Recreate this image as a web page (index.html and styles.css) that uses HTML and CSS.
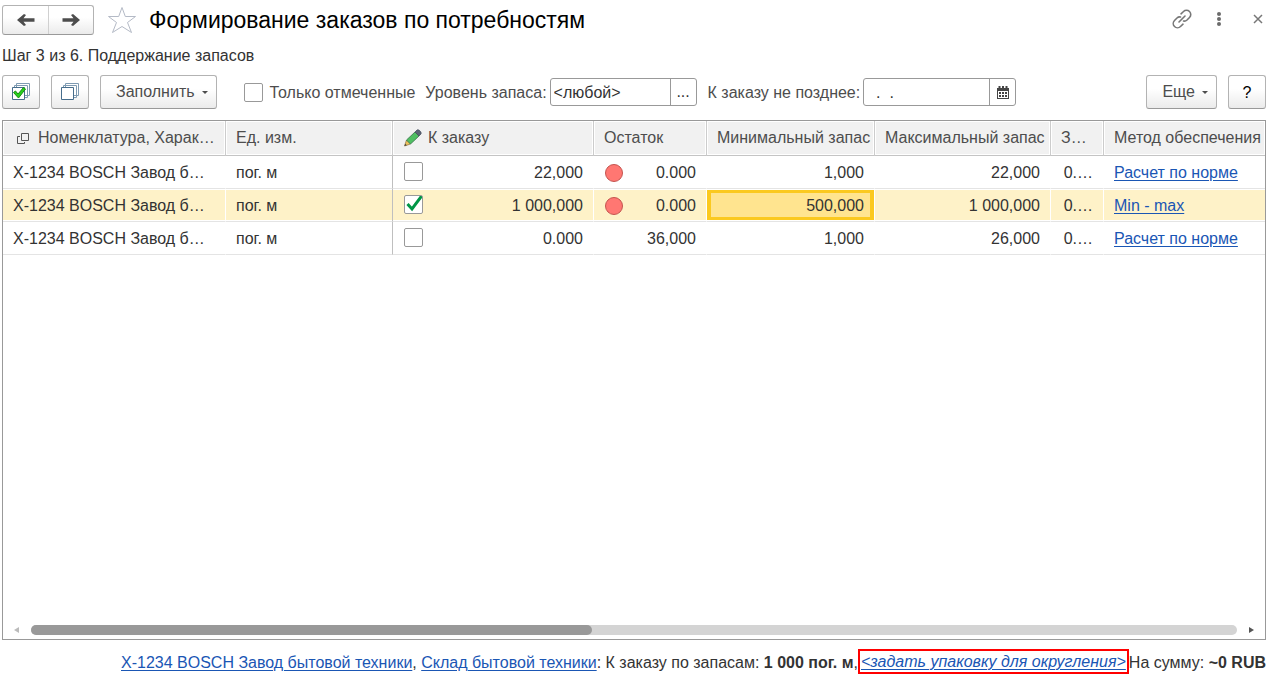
FILE: index.html
```html
<!DOCTYPE html>
<html lang="ru">
<head>
<meta charset="utf-8">
<title>Формирование заказов по потребностям</title>
<link rel="stylesheet" href="styles.css">
</head>
<body>
<div class="page">
  <header class="titlebar">
    <div class="nav">
      <button class="nav-btn" type="button" aria-label="Назад">
        <svg width="18" height="12" viewBox="0 0 18 12"><path d="M0 6 7 0 9 1 6.500 4.300H17.500V7.700H6.500L9 11 7 12Z" fill="#4d4d4d"/></svg>
      </button>
      <button class="nav-btn" type="button" aria-label="Вперед">
        <svg width="18" height="12" viewBox="0 0 18 12"><path d="M18 6 11 0 9 1 11.500 4.300H0.500V7.700H11.500L9 11 11 12Z" fill="#4d4d4d"/></svg>
      </button>
    </div>
    <button class="icon-btn star" type="button" aria-label="В избранное">
      <svg width="30" height="28" viewBox="0 0 30 28"><path d="M15 1.500 18.300 10.500H28.500L20.500 16.500 24.500 26.500 15 20.500 5.500 26.500 9.500 16.500 1.500 10.500H11.700Z" fill="none" stroke="#b4bac6"/></svg>
    </button>
    <h1 class="title">Формирование заказов по потребностям</h1>
    <div class="window-tools">
      <button class="icon-btn" type="button" aria-label="Получить ссылку">
        <svg width="20" height="20" viewBox="0 0 20 20" fill="none" stroke="#777" stroke-width="1.600" stroke-linecap="round"><path d="M9 4.800 11.500 2.500A4 4 0 0 1 17.500 8.500L15 11A4 4 0 0 1 11.500 12M11 15.200 8.500 17.500A4 4 0 0 1 2.500 11.500L5 9A4 4 0 0 1 8.500 8M7 13 13 7"/></svg>
      </button>
      <button class="icon-btn" type="button" aria-label="Меню">
        <svg width="6" height="16" viewBox="0 0 6 16" fill="#6b6b6b"><circle cx="3" cy="3" r="2"/><circle cx="3" cy="8" r="2"/><circle cx="3" cy="13" r="2"/></svg>
      </button>
      <button class="icon-btn" type="button" aria-label="Закрыть">
        <svg width="10" height="10" viewBox="0 0 10 10"><path d="M1 1 9 9M9 1 1 9" stroke="#777" stroke-width="1.500"/></svg>
      </button>
    </div>
  </header>

  <p class="step">Шаг 3 из 6. Поддержание запасов</p>

  <div class="toolbar">
    <button class="btn btn-square" type="button" aria-label="Отметить все">
      <svg width="20" height="18" viewBox="0 0 20 18" fill="#fff"><path d="M5.500.500H18.500V12.500H5.500ZM3.500 2.500H16.500V14.500H3.500Z" stroke="#7f9bb2"/><path d="M1.500 4.500H13.500V16.500H1.500Z" stroke="#466d8c"/><path d="M2.500 9.500 4.500 8 7 11 12.500 4.500 14.500 6 7.500 15Z" fill="#26cf1c" stroke="#158d10"/></svg>
    </button>
    <button class="btn btn-square" type="button" aria-label="Снять отметки">
      <svg width="20" height="18" viewBox="0 0 20 18" fill="#fff"><path d="M5.500.500H18.500V12.500H5.500ZM3.500 2.500H16.500V14.500H3.500Z" stroke="#7f9bb2"/><path d="M1.500 4.500H13.500V16.500H1.500Z" stroke="#466d8c"/></svg>
    </button>
    <button class="btn btn-menu" type="button">Заполнить<span class="caret"></span></button>
    <label class="only-marked"><input class="check" type="checkbox"><span class="check-text">Только отмеченные</span></label>
    <label class="field-label" for="level">Уровень запаса:</label>
    <div class="field field-level">
      <input class="field-input" id="level" type="text" value="&lt;любой&gt;">
      <button class="field-btn" type="button" aria-label="Выбрать">...</button>
    </div>
    <label class="field-label field-label-date" for="date">К заказу не позднее:</label>
    <div class="field field-date">
      <input class="field-input" id="date" type="text" value="&nbsp;&nbsp;.&nbsp;&nbsp;.">
      <button class="field-btn" type="button" aria-label="Календарь">
        <svg width="12" height="13" viewBox="0 0 12 13"><path d="M0 2H1.500V0H3.500V2H5V0H7V2H8.500V0H10.500V2H12V13H0Z" fill="#444"/><path d="M1 5H11V12H1Z" fill="#fff"/><path d="M2 6H4V8H2ZM5 6H7V8H5ZM8 6H10V8H8ZM2 9H4V11H2ZM5 9H7V11H5ZM8 9H10V11H8Z" fill="#444"/></svg>
      </button>
    </div>
    <div class="toolbar-end">
      <button class="btn btn-menu" type="button">Еще<span class="caret"></span></button>
      <button class="btn btn-square help" type="button">?</button>
    </div>
  </div>

  <main class="grid">
    <table class="table">
      <colgroup>
        <col class="c-name"><col class="c-unit"><col class="c-order"><col class="c-rest"><col class="c-min"><col class="c-max"><col class="c-extra"><col>
      </colgroup>
      <thead>
        <tr>
          <th><span class="head"><svg class="head-windows" width="13" height="13" viewBox="0 0 13 13" fill="none" stroke="#555"><path d="M4.500 1.500H11.500V8.500H4.500Z"/><path d="M3 4.500H.500V11.500H7.500V10"/></svg>Номенклатура, Харак…</span></th>
          <th>Ед. изм.</th>
          <th><span class="head head-pen"><svg width="20" height="18" viewBox="0 0 20 18"><path d="M1.500 17 3.500 11 7.500 15Z" fill="#edc15b" stroke="#8c7440" stroke-width=".7"/><path d="M3.500 11 12 3 16 7 7.500 15Z" fill="#4fbf62" stroke="#37724a" stroke-width=".8"/><path d="M12 3 14 1C15.500 0 19 3 18 5L16 7Z" fill="#5b6576" stroke="#424b59" stroke-width=".7"/><path d="M1.500 17 2.200 14.800 3.800 16.200Z" fill="#444"/></svg>К заказу</span></th>
          <th>Остаток</th>
          <th>Минимальный запас</th>
          <th>Максимальный запас</th>
          <th>З…</th>
          <th>Метод обеспечения</th>
        </tr>
      </thead>
      <tbody>
        <tr>
          <td>X-1234 BOSCH Завод б…</td>
          <td>пог. м</td>
          <td><label class="pair"><input class="check" type="checkbox" aria-label="К заказу">22,000</label></td>
          <td><span class="pair"><span class="dot"></span>0.000</span></td>
          <td class="num">1,000</td>
          <td class="num">22,000</td>
          <td class="num">0.…</td>
          <td><a class="link" href="#">Расчет по норме</a></td>
        </tr>
        <tr class="selected">
          <td>X-1234 BOSCH Завод б…</td>
          <td>пог. м</td>
          <td><label class="pair"><input class="check" type="checkbox" aria-label="К заказу" checked>1 000,000</label></td>
          <td><span class="pair"><span class="dot"></span>0.000</span></td>
          <td class="num current">500,000</td>
          <td class="num">1 000,000</td>
          <td class="num">0.…</td>
          <td><a class="link" href="#">Min - max</a></td>
        </tr>
        <tr>
          <td>X-1234 BOSCH Завод б…</td>
          <td>пог. м</td>
          <td><label class="pair"><input class="check" type="checkbox" aria-label="К заказу">0.000</label></td>
          <td class="num">36,000</td>
          <td class="num">1,000</td>
          <td class="num">26,000</td>
          <td class="num">0.…</td>
          <td><a class="link" href="#">Расчет по норме</a></td>
        </tr>
      </tbody>
    </table>
    <div class="scroll">
      <svg width="5" height="6" viewBox="0 0 5 6"><path d="M5 0V6L0 3Z" fill="#bbb"/></svg>
      <div class="scroll-track"><div class="scroll-thumb"></div></div>
      <svg width="5" height="6" viewBox="0 0 5 6"><path d="M0 0V6L5 3Z" fill="#555"/></svg>
    </div>
  </main>

  <footer class="summary">
    <span><a class="link" href="#">X-1234 BOSCH Завод бытовой техники</a>, <a class="link" href="#">Склад бытовой техники</a>: К заказу по запасам: <b>1 000 пог. м</b>,</span>
    <span class="callout"><a class="link" href="#">&lt;задать упаковку для округления&gt;</a></span>
    <span>На сумму: <b>~0 RUB</b></span>
  </footer>
</div>
</body>
</html>
```

FILE: styles.css
```css
* { box-sizing: border-box; }

body {
  margin: 0;
  background: #fff;
  color: #333;
  font: 16px/20px "Liberation Sans", Arial, sans-serif;
}

button, input { font: inherit; color: inherit; margin: 0; }
svg { display: block; flex: none; }

.page {
  display: flex;
  flex-direction: column;
  min-height: 100vh;
  padding: 5px 6px 13px 2px;
}

.titlebar { display: flex; align-items: center; height: 30px; }

.nav {
  display: flex;
  height: 30px;
  border: 1px solid #b3b3b3;
  border-bottom-color: #999;
  border-radius: 3px;
  background: linear-gradient(#fff 40%, #ebebeb);
}
.nav-btn {
  display: flex;
  align-items: center;
  justify-content: center;
  width: 45px;
  padding: 0;
  border: 0;
  background: none;
}
.nav-btn + .nav-btn { border-left: 1px solid #d0d0d0; }

.icon-btn { padding: 0; border: 0; background: none; }
.star { margin: 0 12px 0 13px; }
.title { margin: 0; color: #000; font-size: 23px; line-height: 28px; font-weight: 400; }
.window-tools { display: flex; align-items: center; gap: 24px; margin: 0 3px 2px auto; }
.window-tools .icon-btn:last-child { margin-left: 7px; }

.step { margin: 11px 0 9px; }

.toolbar { display: flex; align-items: center; height: 34px; color: #4d4d4d; white-space: nowrap; }
.toolbar-end { display: flex; gap: 11px; margin-left: auto; }

.btn {
  display: flex;
  align-items: center;
  justify-content: center;
  height: 34px;
  padding: 0;
  border: 1px solid #b3b3b3;
  border-bottom-color: #999;
  border-radius: 3px;
  background: linear-gradient(#fff 40%, #ebebeb);
}
.btn-square { width: 38px; margin-right: 11px; }
.btn-menu { gap: 7px; padding: 0 8px 0 15px; }
.help { margin-right: 0; padding-top: 2px; color: #000; }
.caret { border: 3px solid transparent; border-top-color: #4d4d4d; border-bottom: 0; }

.only-marked { display: flex; align-items: center; gap: 7px; margin: 0 10px 0 27px; }
.check-text, .field-label { padding-top: 2px; }

.check {
  appearance: none;
  flex: none;
  width: 19px;
  height: 19px;
  border: 1px solid #999;
  border-radius: 2px;
  background: #fff;
}
.check:checked {
  background: #fff url("data:image/svg+xml,%3Csvg xmlns='http://www.w3.org/2000/svg' viewBox='0 0 19 19'%3E%3Cpath d='M3.500 9 8 14 18 0.500' fill='none' stroke='%23009646' stroke-width='3'/%3E%3C/svg%3E") border-box;
}

.field {
  display: flex;
  height: 28px;
  border: 1px solid #999;
  border-radius: 3px;
  color: #333;
}
.field-input { flex: 1; min-width: 0; padding: 2px 3px 0; border: 0; background: none; outline: 0; }
.field-btn {
  display: flex;
  align-items: center;
  justify-content: center;
  width: 26px;
  padding: 0;
  border: 0;
  border-left: 1px solid #999;
  background: none;
}
.field-label { margin-right: 3px; }
.field-label-date { margin-left: 11px; }
.field-level { width: 147px; }
.field-date { width: 153px; }

.grid {
  display: flex;
  flex: 1;
  flex-direction: column;
  margin-top: 11px;
  border: 1px solid #999;
}

.table { width: 100%; table-layout: fixed; border-collapse: separate; border-spacing: 0; }
.c-name { width: 223px; }
.c-unit { width: 167px; }
.c-order { width: 201px; }
.c-rest { width: 113px; }
.c-min { width: 168px; }
.c-max { width: 176px; }
.c-extra { width: 53px; }

th, td { padding: 0 10px; overflow: hidden; text-align: left; white-space: nowrap; }
th {
  height: 35px;
  border-right: 1px solid #ccc;
  border-bottom: 1px solid #c4c4c4;
  background: #f1f1f1;
  box-shadow: inset 0 0 0 1px #fff;
  color: #4d4d4d;
  font-weight: 400;
}
/* Long headings run into the cell's right padding instead of being cut. */
th { padding-right: 0; }
td {
  height: 33px;
  padding-top: 2px;
  border-right: 1px solid transparent;
  border-bottom: 1px solid #e4e4e4;
}
th:last-child, td:last-child { border-right: 0; padding-right: 0; }
td:nth-child(2) { border-right-color: #bfbfbf; }
.num { text-align: right; }

.selected td {
  border-right-color: #fff;
  background: #fef2c8;
  background-clip: padding-box;
  box-shadow: inset 0 1px #fff, inset 0 -1px #fff;
}
.selected td:nth-child(2) { border-right-color: #bfbfbf; }
.selected .current {
  background: #ffe48f;
  background-clip: padding-box;
  box-shadow: inset 0 1px #fff, inset 0 -1px #fff, inset 0 0 0 4px #fbc91f;
}

.head { display: flex; align-items: center; gap: 8px; }
.head-windows { margin-left: 4px; }
.head-pen { gap: 5px; }
.pair { display: flex; align-items: center; justify-content: space-between; height: 20px; padding-left: 1px; }
.pair .check { margin-bottom: 3px; }
.dot {
  width: 18px;
  height: 18px;
  border: 1px solid #c4544f;
  border-radius: 50%;
  background: #ff7772;
}

.link { color: #1a56b4; text-decoration: underline; text-underline-offset: 2px; text-decoration-thickness: 1px; }

.scroll { display: flex; align-items: center; height: 10px; margin: auto 11px 4px; }
.scroll-track { flex: 1; height: 10px; margin: 0 12px; border-radius: 5px; background: #d4d4d4; }
.scroll-thumb { width: 46.5%; height: 10px; border-radius: 5px; background: #999; }

.summary { display: flex; align-items: center; justify-content: flex-end; margin-top: 9px; line-height: 21px; white-space: nowrap; }
.summary > span { padding-top: 2px; }
.summary > .callout { padding: 0 1px; border: 2px solid #f00; font-style: italic; }
```
